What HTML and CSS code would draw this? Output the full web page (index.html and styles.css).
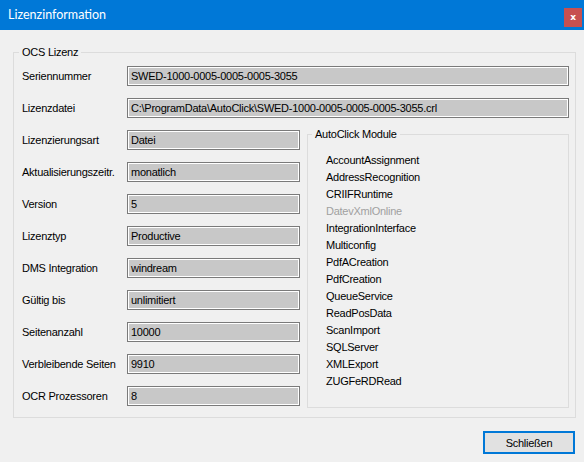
FILE: index.html
```html
<!DOCTYPE html>
<html lang="de">
<head>
  <meta charset="UTF-8">
  <title>Lizenzinformation</title>
  <link rel="stylesheet" href="styles.css">
</head>
<body>
  <div class="window">
    <div class="titlebar">
      <span class="title">Lizenzinformation</span>
      <span class="close">x</span>
    </div>

    <div class="content">
      <fieldset class="group ocs">
        <legend>OCS Lizenz</legend>

        <div class="row">
          <label>Seriennummer</label>
          <div class="box wide">SWED-1000-0005-0005-0005-3055</div>
        </div>
        <div class="row">
          <label>Lizenzdatei</label>
          <div class="box wide">C:\ProgramData\AutoClick\SWED-1000-0005-0005-0005-3055.crl</div>
        </div>

        <div class="lower">
          <div class="fields">
            <div class="row"><label>Lizenzierungsart</label><div class="box">Datei</div></div>
            <div class="row"><label>Aktualisierungszeitr.</label><div class="box">monatlich</div></div>
            <div class="row"><label>Version</label><div class="box">5</div></div>
            <div class="row"><label>Lizenztyp</label><div class="box">Productive</div></div>
            <div class="row"><label>DMS Integration</label><div class="box">windream</div></div>
            <div class="row"><label>Gültig bis</label><div class="box">unlimitiert</div></div>
            <div class="row"><label>Seitenanzahl</label><div class="box">10000</div></div>
            <div class="row"><label>Verbleibende Seiten</label><div class="box">9910</div></div>
            <div class="row"><label>OCR Prozessoren</label><div class="box">8</div></div>
          </div>

          <fieldset class="group modules">
            <legend>AutoClick Module</legend>
            <ul>
              <li>AccountAssignment</li>
              <li>AddressRecognition</li>
              <li>CRIIFRuntime</li>
              <li class="disabled">DatevXmlOnline</li>
              <li>IntegrationInterface</li>
              <li>Multiconfig</li>
              <li>PdfACreation</li>
              <li>PdfCreation</li>
              <li>QueueService</li>
              <li>ReadPosData</li>
              <li>ScanImport</li>
              <li>SQLServer</li>
              <li>XMLExport</li>
              <li>ZUGFeRDRead</li>
            </ul>
          </fieldset>
        </div>
      </fieldset>

      <div class="footer">
        <button class="btn">Schließen</button>
      </div>
    </div>
  </div>
</body>
</html>
```

FILE: styles.css
```css
body {
  margin: 0;
  background: #f0f0f0;
  font-family: 'Liberation Sans', Arial, sans-serif;
  font-size: 11px;
  letter-spacing: -0.25px;
  color: #000;
}

.window {
  width: 584px;
  height: 462px;
  background: #f0f0f0;
}

.titlebar {
  height: 30px;
  background: #0078d7;
  display: flex;
  justify-content: space-between;
  align-items: flex-start;
}

.title {
  font-family: Lato, 'Noto Sans', sans-serif;
  font-size: 12.5px;
  letter-spacing: 0;
  color: #fff;
  margin: 7px 0 0 8px;
  line-height: 16px;
}

.close {
  width: 18px;
  height: 19px;
  margin: 8px 2px 0 0;
  background: #c75050;
  color: #fff;
  font-family: 'DejaVu Sans', sans-serif;
  font-size: 9px;
  font-weight: bold;
  line-height: 18px;
  text-align: center;
}

.content {
  padding: 15px 8px 0 13px;
}

/* group boxes */
.group {
  margin: 0;
  border: 1px solid #dcdcdc;
  min-width: 0;
}

.group legend {
  line-height: 14px;
  padding: 0 3px;
}

.ocs {
  padding: 7px 6px 9px 8px;
}

.ocs > legend {
  margin-left: -3px;
}

.row {
  display: flex;
  align-items: center;
  height: 20px;
  margin-bottom: 12px;
}

.fields .row:last-child {
  margin-bottom: 0;
}

.row label {
  width: 105px;
  flex-shrink: 0;
}

.box {
  box-sizing: border-box;
  height: 20px;
  width: 173px;
  border: 1px solid #7a7a7a;
  box-shadow: inset 0 0 0 1px #fff;
  background: #c8c8c8;
  padding: 0 3px;
  line-height: 18px;
  white-space: nowrap;
  overflow: hidden;
}

.box.wide {
  width: 443px;
}

.lower {
  display: flex;
  align-items: flex-start;
}

.modules {
  margin: -3px 0 0 7px;
  width: 263px;
  box-sizing: border-box;
  height: 281px;
  padding: 11px 8px 0 18px;
}

.modules > legend {
  margin-left: -14px;
}

.modules ul {
  list-style: none;
  margin: 0;
  padding: 0;
}

.modules li {
  line-height: 17px;
}

.modules li.disabled {
  color: #a0a0a0;
}

.footer {
  display: flex;
  justify-content: flex-end;
  padding: 13px 1px 0 0;
}

.btn {
  box-sizing: border-box;
  width: 92px;
  height: 23px;
  border: 2px solid #0078d7;
  background: #e1e1e1;
  font-family: inherit;
  font-size: 11px;
  letter-spacing: -0.25px;
  color: #000;
  padding: 0;
}
```
